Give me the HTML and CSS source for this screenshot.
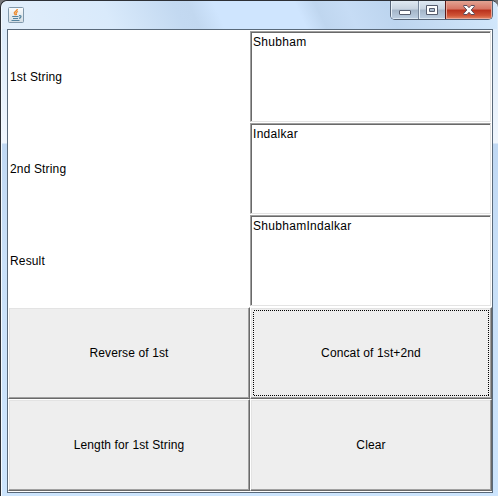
FILE: index.html
```
<!DOCTYPE html>
<html lang="en">
<head>
<meta charset="utf-8">
<title>Strings</title>
<link rel="stylesheet" href="styles.css">
</head>
<body>
<div class="window">
  <div class="titlebar">
    <svg class="java" width="16" height="16" viewBox="0 0 16 16">
      <defs><linearGradient id="tile" x2="0" y2="1"><stop stop-color="#fafcfd"/><stop offset="1" stop-color="#d3dde4"/></linearGradient></defs>
      <rect x=".5" y=".5" width="15" height="15" rx="1" fill="url(#tile)" stroke="#8199ac"/>
      <path d="M9.3 2C9.6 4 5.5 4.6 6.3 6.2L7.4 8.2M10 4.5C8 5.4 7.6 6 8.3 7L8.5 8.2" fill="none" stroke="#ed8a2c" stroke-width="1.3"/>
      <path d="M4.2 9.5H10.5M5 11.5H10M3.5 13.5H11.5M11 8.6C14 8.3 13.3 10.8 11 11.4" fill="none" stroke="#54839f" stroke-width="1.2"/>
    </svg>
    <div class="controls">
      <span class="control minimize"><svg width="12" height="5"><rect x=".5" y=".5" width="11" height="4" rx=".5" fill="#fff" stroke="#565d6e"/></svg></span>
      <span class="control maximize"><svg width="12" height="10"><path d="M.5.5H11.5V9.5H.5ZM3.5 3.5V6.5H8.5V3.5Z" fill="#fff" fill-rule="evenodd" stroke="#565d6e"/></svg></span>
      <span class="control close"><svg width="12" height="10"><path d="M.7.5H4L6 2.7 8 .5H11.3V1.5L8.2 5 11.3 8.5V9.5H8L6 7.3 4 9.5H.7V8.5L3.8 5 .7 1.5Z" fill="#fff" stroke="#5c4c5a"/></svg></span>
    </div>
  </div>
  <div class="client">
    <div class="label">1st String</div><div class="field">Shubham</div>
    <div class="label">2nd String</div><div class="field">Indalkar</div>
    <div class="label">Result</div><div class="field">ShubhamIndalkar</div>
    <button class="button">Reverse of 1st</button>
    <button class="button focused"><svg class="focus" width="236" height="86"><rect x=".5" y=".5" width="235" height="85" fill="none" stroke="#000" stroke-dasharray="1 1" shape-rendering="crispEdges"/></svg>Concat of 1st+2nd</button>
    <button class="button">Length for 1st String</button>
    <button class="button">Clear</button>
  </div>
</div>
</body>
</html>
```
FILE: styles.css
```
* { box-sizing: border-box; }
body { margin: 0; background: #77777a; font: 12px/14px "Liberation Sans", Arial, sans-serif; color: #000; overflow: hidden; }
.window {
  width: 498px; height: 496px; padding: 0 5px 3px 6px;
  border: 1px solid #2d3036; border-right: 0; border-bottom: 0;
  border-radius: 7px 7px 0 0;
  background: linear-gradient(#e4f0fb 0, #dcebfa 30px, #f0f6fd 142px, #c0d8f3 143px, #c9e0f8 260px, #cde5fd 100%);
  box-shadow: inset 1px 1px #f4faff;
}
.titlebar {
  display: flex; justify-content: space-between; height: 28px; margin: 0 -4px 0 -5px; padding: 0 4px 0 6px;
  background: linear-gradient(65deg, #e3effb 0, #d9eafb 22%, #c3d9f1 36%, #c2d8f0 39%, #cfe5fe 44%, #cfe5fe 60%, #bfd6ef 64%, #c6dcf5 70%, #bdd5ef 78%, #d3e8fc 100%);
  border-radius: 6px 6px 0 0;
}
.java { margin-top: 6px; }
.controls {
  display: flex; width: 103px; height: 19px; overflow: hidden;
  border: 1px solid #566477; border-top: 0; border-radius: 0 0 5px 5px;
}
.control {
  display: flex; align-items: center; justify-content: center; width: 28px;
  background: linear-gradient(#dfe9f2 0, #c7d3e0 45%, #a4b5c8 50%, #bdcfe2 100%);
  border-right: 1px solid #77869a; box-shadow: inset 1px 0 #e8f1f9, inset 0 -1px #dce8f3;
}
.minimize svg { margin-top: 4px; }
.maximize { width: 27px; }
.close {
  flex: 1; border-right: 0; border-left: 1px solid #5a1b18; margin-left: -1px;
  background: linear-gradient(#e3a393 0, #d77463 45%, #b8301c 50%, #cf5336 80%, #e58a65 100%);
  box-shadow: inset 1px 0 #e9a798, inset -1px -1px #e9a798;
}
.client {
  display: grid; grid-template: repeat(5, 92px) / 242px 242px;
  width: 486px; height: 464px; padding-top: 1px;
  background: #fff; border: 1px solid #59697a;
}
.label { display: flex; align-items: center; padding-left: 2px; letter-spacing: .15px; }
.field {
  width: 241px; height: 91px; padding: 3px 2px; letter-spacing: .3px;
  border: 1px solid; border-color: #a0a0a0 #e3e3e3 #e3e3e3 #a0a0a0;
  box-shadow: inset 1px 1px #696969;
}
.button {
  position: relative; display: flex; align-items: center; justify-content: center; padding: 0;
  font: inherit; letter-spacing: .12px; color: inherit; background: #eee;
  border: 1px solid; border-color: #fff #696969 #696969 #fff;
  box-shadow: inset -1px -1px #a0a0a0, inset 1px 1px #e3e3e3;
}
.focus { position: absolute; left: 2px; top: 2px; }
```
